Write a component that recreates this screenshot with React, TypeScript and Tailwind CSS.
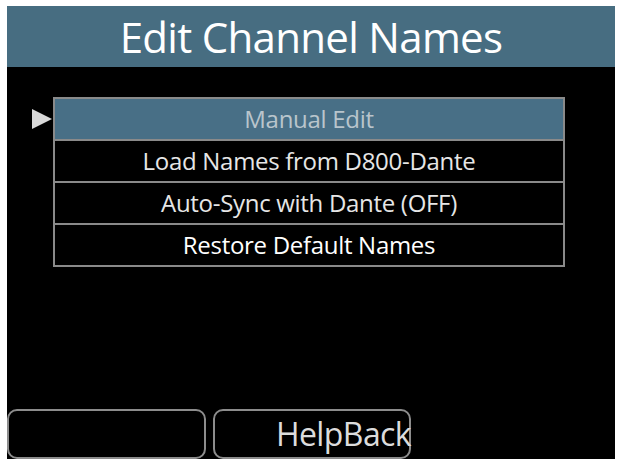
import React from "react";

const rows = [
  "Manual Edit",
  "Load Names from D800-Dante",
  "Auto-Sync with Dante (OFF)",
  "Restore Default Names",
];

export default function App() {
  return (
    <div
      className="w-[621px] h-[465px] bg-white pl-[7px] pt-[6px] pr-[6px] pb-[6px]"
      style={{ fontFamily: '"Open Sans", "Noto Sans", sans-serif' }}
    >
      <div className="w-[608px] h-[453px] bg-black flex flex-col">
        <div className="h-[61px] bg-[#476d81] flex items-center justify-center">
          <span className="text-[42px] text-white leading-none tracking-[-0.7px]">
            Edit Channel Names
          </span>
        </div>
        <div className="flex mt-[30px]">
          <div className="w-[46px] flex justify-end pt-[11px]">
            <svg width="22" height="22" viewBox="0 0 22 22">
              <polygon points="1,1 21,11 1,21" fill="#d9d9d9" />
            </svg>
          </div>
          <div className="w-[512px] border-2 border-[#8a8a8a] flex flex-col">
            {rows.map((r, i) => (
              <div
                key={r}
                className={`flex items-center justify-center text-[24px] tracking-[-0.3px] ${
                  i > 0 ? "h-[42px] border-t-2 border-[#8a8a8a]" : "h-[40px]"
                } ${i === 0 ? "bg-[#486f86] text-[#b9c5cc]" : i === 3 ? "text-white" : "text-[#e6e6e6]"}`}
              >
                {r}
              </div>
            ))}
          </div>
        </div>
        <div className="flex-1" />
        <div className="flex gap-[7px] h-[50px]">
          <div className="w-[199px] border-2 border-[#8c8c8c] rounded-[10px]" />
          <div className="w-[198px] border-2 border-[#8c8c8c] rounded-[10px] flex items-center justify-end overflow-visible">
            <span className="text-[32px] text-[#dcdcdc] leading-none whitespace-nowrap mr-[-2px] tracking-[-0.6px]">
              HelpBack
            </span>
          </div>
        </div>
      </div>
    </div>
  );
}
